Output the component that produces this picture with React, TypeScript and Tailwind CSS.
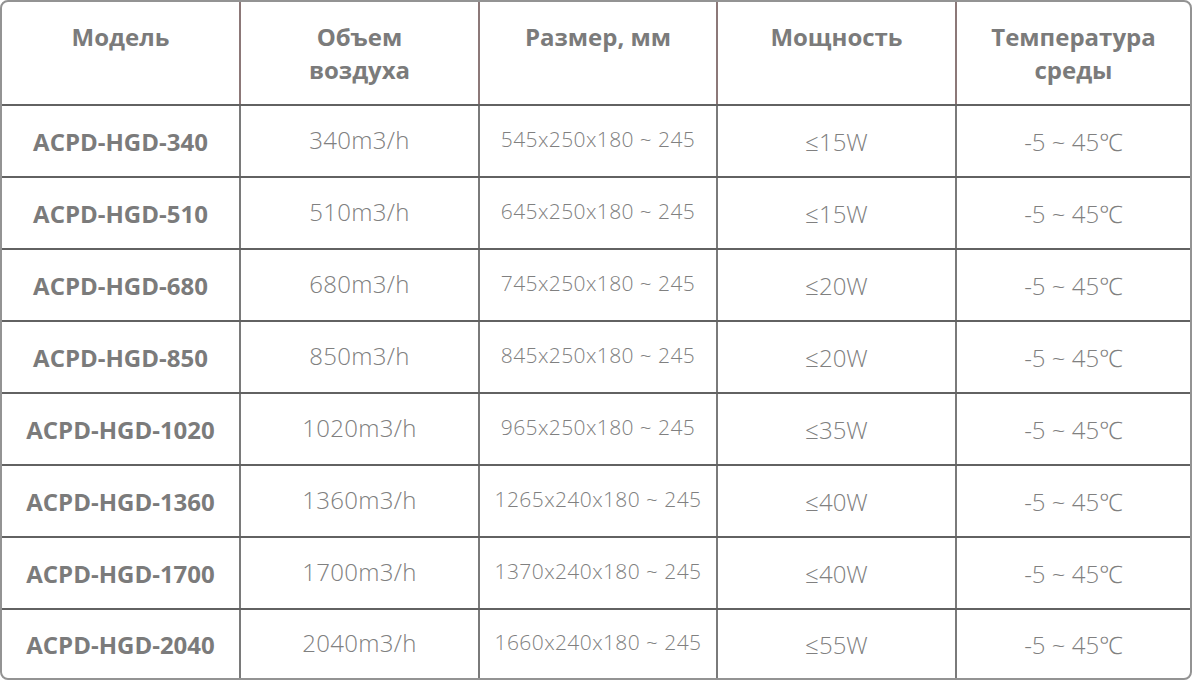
import React from 'react';

interface Row {
  model: string;
  air: string;
  size: string;
  power: string;
  temp: string;
}

const rows: Row[] = [
  { model: 'ACPD-HGD-340', air: '340m3/h', size: '545x250x180 ~ 245', power: '≤15W', temp: '-5 ~ 45℃' },
  { model: 'ACPD-HGD-510', air: '510m3/h', size: '645x250x180 ~ 245', power: '≤15W', temp: '-5 ~ 45℃' },
  { model: 'ACPD-HGD-680', air: '680m3/h', size: '745x250x180 ~ 245', power: '≤20W', temp: '-5 ~ 45℃' },
  { model: 'ACPD-HGD-850', air: '850m3/h', size: '845x250x180 ~ 245', power: '≤20W', temp: '-5 ~ 45℃' },
  { model: 'ACPD-HGD-1020', air: '1020m3/h', size: '965x250x180 ~ 245', power: '≤35W', temp: '-5 ~ 45℃' },
  { model: 'ACPD-HGD-1360', air: '1360m3/h', size: '1265x240x180 ~ 245', power: '≤40W', temp: '-5 ~ 45℃' },
  { model: 'ACPD-HGD-1700', air: '1700m3/h', size: '1370x240x180 ~ 245', power: '≤40W', temp: '-5 ~ 45℃' },
  { model: 'ACPD-HGD-2040', air: '2040m3/h', size: '1660x240x180 ~ 245', power: '≤55W', temp: '-5 ~ 45℃' },
];

const headers = ['Модель', 'Объем\nвоздуха', 'Размер, мм', 'Мощность', 'Температура\nсреды'];

const cols = 'grid grid-cols-[237px_239px_238px_239px_1fr]';

export default function App() {
  return (
    <div
      className="w-[1192px] h-[680px] bg-white text-[#7b7b7b]"
      style={{ fontFamily: '"Open Sans", "Noto Sans", sans-serif' }}
    >
      <div className="h-full border-2 border-[#939393] rounded-[8px] overflow-hidden">
        {/* Header */}
        <div className={`${cols} h-[102px]`}>
          {headers.map((h, i) => (
            <div
              key={h}
              className={`pt-[18px] text-center text-[24px] leading-[33px] font-bold whitespace-pre-line ${
                i > 0 ? 'border-l-2 border-[#8c7878]' : ''
              }`}
            >
              {h}
            </div>
          ))}
        </div>

        {/* Body */}
        {rows.map((r, idx) => (
          <div
            key={r.model}
            className={`${cols} ${idx === rows.length - 1 ? 'h-[70px]' : 'h-[72px]'} border-t-2 border-[#626262]`}
          >
            <div className="flex items-center justify-center text-[24px] font-bold pt-[2px]">{r.model}</div>
            <div className="flex items-center justify-center border-l-2 border-[#7a7a7a] text-[24px] font-light tracking-[0.3px] pb-[2px] text-[#808080]">
              {r.air}
            </div>
            <div className="flex items-center justify-center border-l-2 border-[#7a7a7a] text-[21px] font-light tracking-[0.4px] pb-[2px] text-[#808080]">
              {r.size}
            </div>
            <div className="flex items-center justify-center border-l-2 border-[#7a7a7a] text-[24px] font-light pt-[2px] text-[#808080]">
              {r.power}
            </div>
            <div className="flex items-center justify-center border-l-2 border-[#7a7a7a] text-[24px] font-light pt-[2px] text-[#808080]">
              {r.temp}
            </div>
          </div>
        ))}
      </div>
    </div>
  );
}
